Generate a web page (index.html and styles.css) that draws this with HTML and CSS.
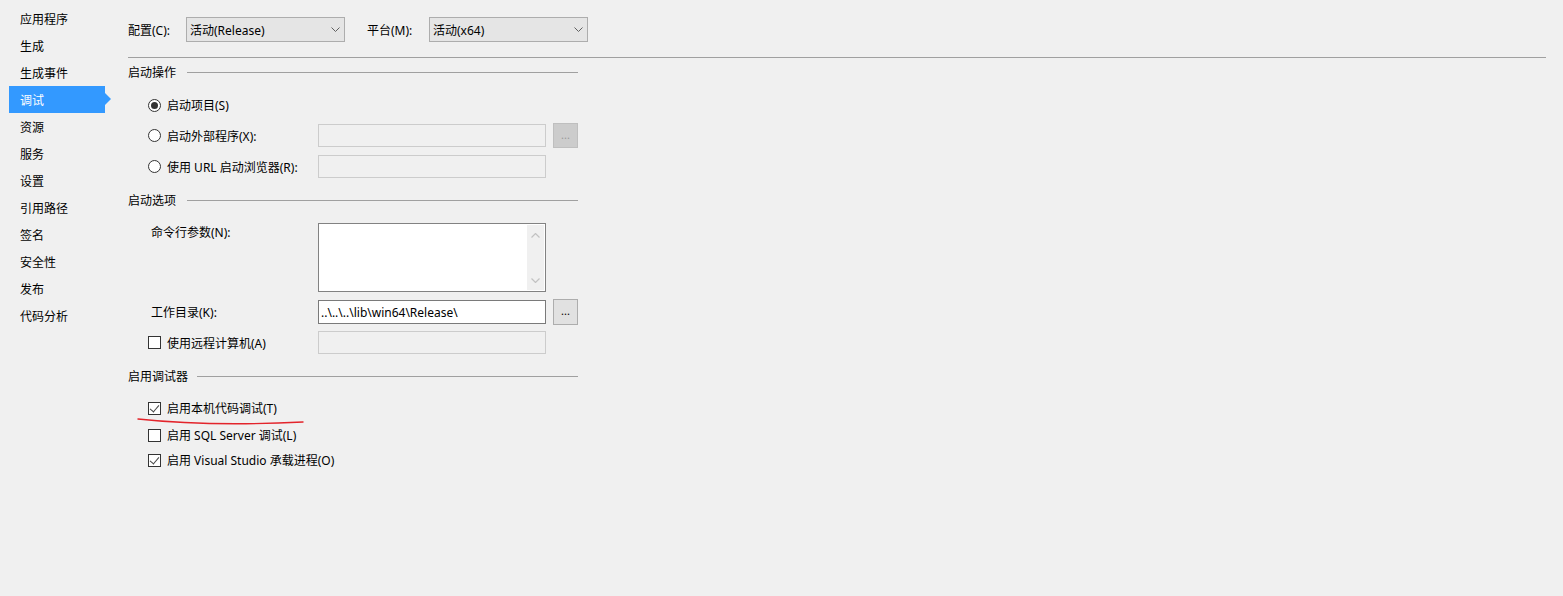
FILE: index.html
```html
<!DOCTYPE html>
<html lang="zh-CN">
<head>
<meta charset="utf-8">
<title>调试</title>
<link rel="stylesheet" href="styles.css">
</head>
<body>
<div class="app">
  <nav class="sidebar">
    <div class="nav-item">应用程序</div>
    <div class="nav-item">生成</div>
    <div class="nav-item">生成事件</div>
    <div class="nav-item active">调试</div>
    <div class="nav-item">资源</div>
    <div class="nav-item">服务</div>
    <div class="nav-item">设置</div>
    <div class="nav-item">引用路径</div>
    <div class="nav-item">签名</div>
    <div class="nav-item">安全性</div>
    <div class="nav-item">发布</div>
    <div class="nav-item">代码分析</div>
  </nav>
  <main class="content">
    <div class="toprow">
      <span class="lbl-config">配置(C):</span>
      <div class="combo"><span>活动(Release)</span><svg class="chev" width="9" height="5" viewBox="0 0 9 5"><path d="M0.5 0.5 L4.5 4.5 L8.5 0.5" fill="none" stroke="#606060" stroke-width="1"/></svg></div>
      <span class="lbl-platform">平台(M):</span>
      <div class="combo"><span>活动(x64)</span><svg class="chev" width="9" height="5" viewBox="0 0 9 5"><path d="M0.5 0.5 L4.5 4.5 L8.5 0.5" fill="none" stroke="#606060" stroke-width="1"/></svg></div>
    </div>
    <div class="hsep"></div>

    <div class="section-head sh1"><span>启动操作</span><div class="sline"></div></div>

    <div class="row r-radio1">
      <div class="opt"><span class="radio checked"></span><span class="txt">启动项目(S)</span></div>
    </div>
    <div class="row r-radio2">
      <div class="opt"><span class="radio"></span><span class="txt">启动外部程序(X):</span></div>
      <div class="field disabled"></div>
      <div class="btn disabled">...</div>
    </div>
    <div class="row r-radio3">
      <div class="opt"><span class="radio"></span><span class="txt">使用 URL 启动浏览器(R):</span></div>
      <div class="field disabled"></div>
    </div>

    <div class="section-head sh2"><span>启动选项</span><div class="sline"></div></div>

    <div class="row r-cmd">
      <div class="plain-lbl">命令行参数(N):</div>
      <div class="textarea">
        <div class="scroll">
          <svg width="9" height="5" viewBox="0 0 9 5"><path d="M0.5 4.5 L4.5 0.5 L8.5 4.5" fill="none" stroke="#c2c2c2" stroke-width="1.2"/></svg>
          <svg width="9" height="5" viewBox="0 0 9 5"><path d="M0.5 0.5 L4.5 4.5 L8.5 0.5" fill="none" stroke="#c2c2c2" stroke-width="1.2"/></svg>
        </div>
      </div>
    </div>
    <div class="row r-wd">
      <div class="plain-lbl">工作目录(K):</div>
      <div class="field active">..\..\..\lib\win64\Release\</div>
      <div class="btn">...</div>
    </div>
    <div class="row r-remote">
      <div class="opt"><span class="check"></span><span class="txt">使用远程计算机(A)</span></div>
      <div class="field disabled"></div>
    </div>

    <div class="section-head sh3"><span>启用调试器</span><div class="sline"></div></div>

    <div class="row r-cb1">
      <div class="opt wide"><span class="check checked"></span><span class="txt">启用本机代码调试(T)</span></div>
    </div>
    <div class="row r-cb2">
      <div class="opt wide"><span class="check"></span><span class="txt">启用 SQL Server 调试(L)</span></div>
    </div>
    <div class="row r-cb3">
      <div class="opt wide"><span class="check checked"></span><span class="txt">启用 Visual Studio 承载进程(O)</span></div>
    </div>
  </main>
</div>
<svg class="annot" width="1563" height="596" viewBox="0 0 1563 596">
  <path d="M138 419 C175 423 225 426 303 422" fill="none" stroke="#e3242b" stroke-width="1.4" stroke-linecap="round"/>
</svg>
</body>
</html>
```

FILE: styles.css
```css
* { box-sizing: border-box; }
html, body {
  margin: 0;
  padding: 0;
  background: #f0f0f0;
}
body {
  font-family: "Noto Sans", "Noto Sans CJK SC", sans-serif;
  font-size: 12px;
  line-height: 16px;
  color: #000;
  width: 1563px;
  height: 596px;
  overflow: hidden;
  position: relative;
}
.app {
  display: flex;
}
.sidebar {
  width: 128px;
  flex: none;
  padding-top: 5px;
  padding-left: 9px;
}
.nav-item {
  position: relative;
  width: 96px;
  height: 27px;
  line-height: 27px;
  padding-top: 1px;
  padding-left: 11px;
}
.nav-item.active {
  background: #3399ff;
  color: #fff;
}
.nav-item.active::after {
  content: "";
  position: absolute;
  left: 96px;
  top: 7px;
  border-left: 6px solid #3399ff;
  border-top: 6px solid transparent;
  border-bottom: 6px solid transparent;
}
.content {
  padding-top: 17px;
  display: flex;
  flex-direction: column;
}
.toprow {
  display: flex;
  align-items: center;
  height: 25px;
}
.lbl-config { width: 58px; padding-top: 2px; }
.lbl-platform { width: 62px; margin-left: 22px; padding-top: 2px; }
.combo {
  width: 159px;
  height: 25px;
  border: 1px solid #adadad;
  background: #e5e5e5;
  display: flex;
  align-items: center;
  justify-content: space-between;
  padding: 0 4px 0 3px;
}
.combo span { padding-top: 2px; }
.hsep {
  margin-top: 15px;
  width: 1418px;
  height: 1px;
  background: #a0a0a0;
}
.section-head {
  display: flex;
  align-items: center;
  width: 450px;
  height: 16px;
  gap: 10px;
}
.section-head span { padding-top: 2px; }
.section-head .sline {
  flex: 1;
  height: 1px;
  background: #a0a0a0;
}
.sh1 { margin-top: 6px; gap: 11px; }
.sh2 { margin-top: 14px; gap: 11px; }
.sh3 { margin-top: 14px; gap: 9px; }
.row {
  display: flex;
  align-items: center;
}
.opt {
  display: flex;
  align-items: center;
  gap: 6px;
  width: 190px;
  padding-left: 20px;
  white-space: nowrap;
}
.opt.wide { width: auto; }
.txt { padding-top: 2px; }
.plain-lbl {
  width: 190px;
  padding-left: 23px;
  padding-top: 2px;
}
.radio {
  width: 13px;
  height: 13px;
  border: 1px solid #333;
  border-radius: 50%;
  background: #fff;
  flex: none;
  display: flex;
  align-items: center;
  justify-content: center;
}
.radio.checked::after {
  content: "";
  width: 7px;
  height: 7px;
  border-radius: 50%;
  background: #333;
}
.check {
  width: 13px;
  height: 13px;
  border: 1px solid #333;
  background: #fff;
  flex: none;
  position: relative;
}
.check.checked::after {
  content: "";
  position: absolute;
  left: 3px;
  top: 0px;
  width: 4px;
  height: 8px;
  border-right: 1.3px solid #444;
  border-bottom: 1.3px solid #444;
  transform: rotate(40deg);
}
.field {
  width: 228px;
  height: 23px;
  border: 1px solid #cccccc;
  background: #f0f0f0;
  padding-left: 2px;
  padding-top: 1px;
  line-height: 21px;
  white-space: nowrap;
}
.field.active {
  height: 24px;
  line-height: 22px;
  border-color: #7a7a7a;
  background: #fff;
}
.btn {
  margin-left: 7px;
  width: 25px;
  height: 26px;
  border: 1px solid #adadad;
  background: #e1e1e1;
  text-align: center;
  line-height: 22px;
  font-size: 11px;
}
.btn.disabled {
  height: 25px;
  border-color: #bfbfbf;
  background: #cccccc;
  color: #9a9a9a;
}
.r-radio1 { margin-top: 14px; height: 22px; }
.r-radio2 { margin-top: 7px; height: 25px; }
.r-radio3 { margin-top: 7px; height: 23px; }
.r-cmd { margin-top: 15px; align-items: flex-start; height: 69px; }
.textarea {
  width: 228px;
  height: 69px;
  border: 1px solid #828282;
  background: #fff;
  display: flex;
  justify-content: flex-end;
  padding: 1px;
}
.scroll {
  width: 17px;
  height: 100%;
  background: #f0f0f0;
  display: flex;
  flex-direction: column;
  justify-content: space-between;
  align-items: center;
  padding: 8px 0 7px;
}
.r-wd { margin-top: 7px; height: 26px; }
.r-remote { margin-top: 6px; height: 23px; }
.r-cb1 { margin-top: 14px; height: 20px; }
.r-cb2 { margin-top: 7px; height: 20px; }
.r-cb3 { margin-top: 5px; height: 20px; }
.annot {
  position: absolute;
  left: 0;
  top: 0;
  pointer-events: none;
}
```
